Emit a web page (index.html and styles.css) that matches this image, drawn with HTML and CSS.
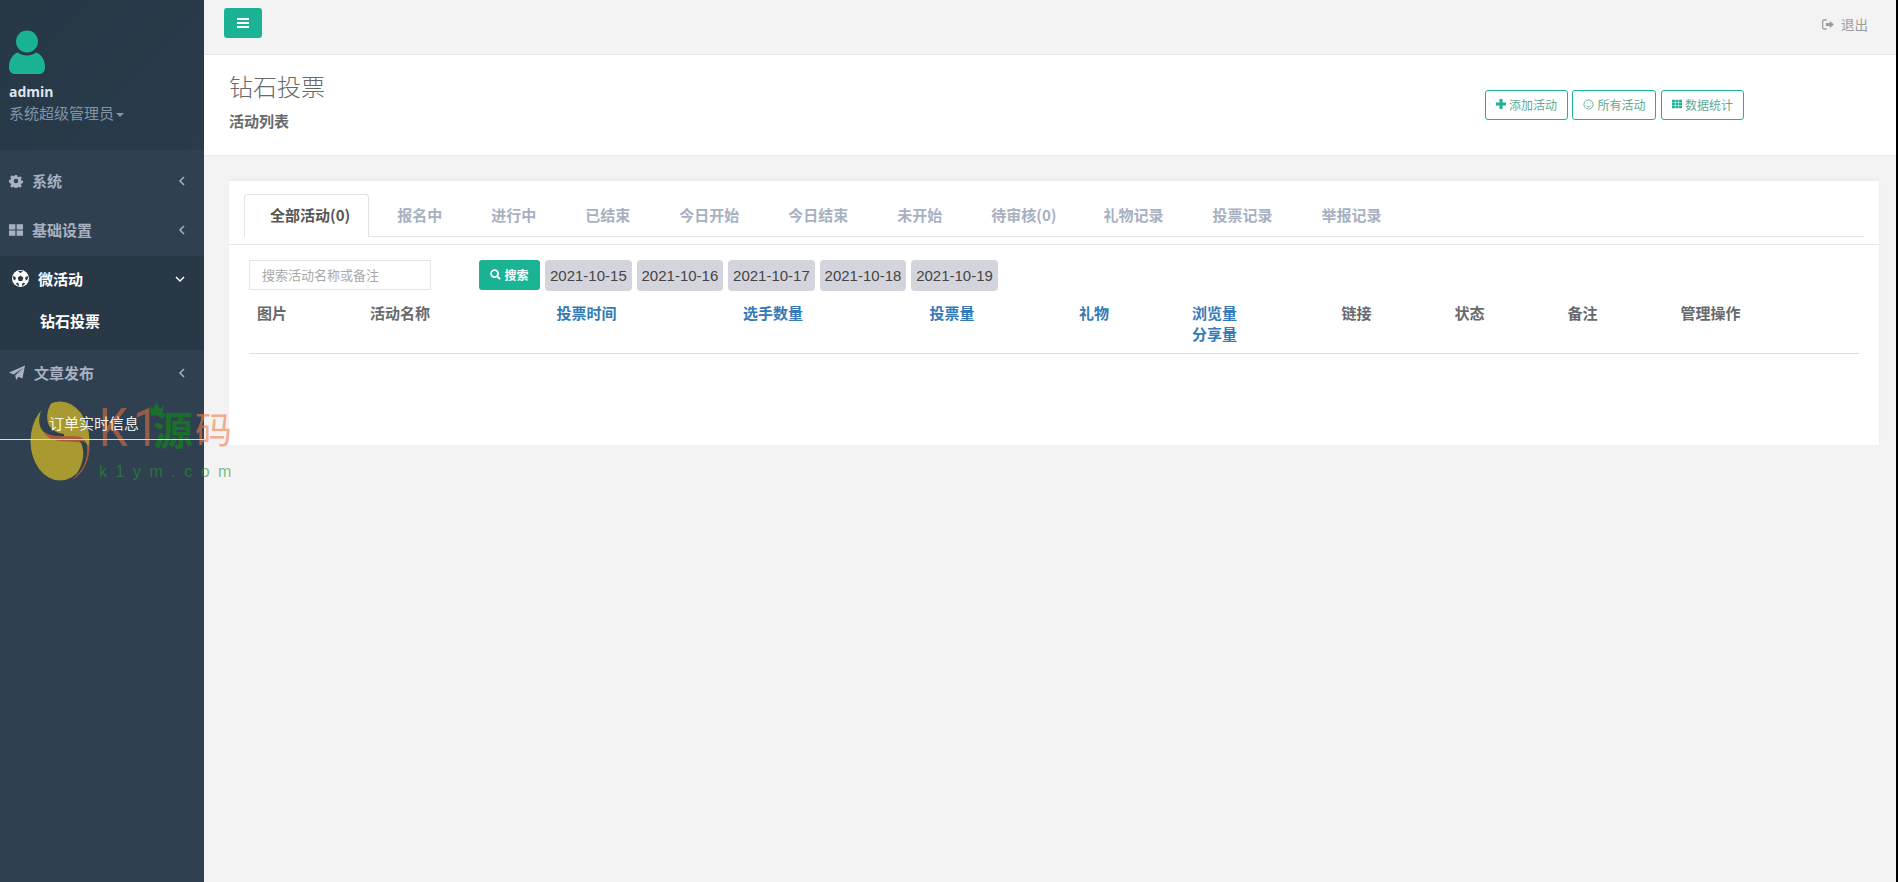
FILE: index.html
```html
<!DOCTYPE html>
<html lang="zh-CN">
<head>
<meta charset="utf-8">
<title>钻石投票</title>
<link rel="stylesheet" href="styles.css">
</head>
<body>
<div class="app">
  <aside class="sidebar">
    <div class="profile">
      <svg class="avatar" viewBox="0 0 36 44"><circle cx="18" cy="11.500" r="11"/><path d="M9 22.500c2.500 2 5.500 3 9 3s6.500-1 9-3c5 1.500 9 7 9 14v1c0 4-2.500 6.500-6 6.500H6c-3.500 0-6-2.500-6-6.500v-1c0-7 4-12.500 9-14z"/></svg>
      <div class="profile-name">admin</div>
      <div class="profile-role">系统超级管理员<span class="caret"></span></div>
    </div>
    <nav class="nav">
      <a class="nav-item">
        <svg class="nav-icon" viewBox="0 0 16 16"><path d="M6.700 1h2.600l.4 2 1.300.6 1.800-1.100 1.800 1.800-1.100 1.800.6 1.300 1.900.4v2.600l-1.900.4-.6 1.300 1.100 1.800-1.800 1.800-1.800-1.100-1.300.6-.4 1.800H6.700l-.4-1.800-1.300-.6-1.800 1.100-1.800-1.800 1.100-1.800-.6-1.300L0 9.400V6.800l1.900-.4.6-1.300-1.100-1.800 1.800-1.800 1.800 1.100 1.300-.6zM8 5.500a2.600 2.600 0 1 0 0 5.200 2.600 2.600 0 0 0 0-5.200z" fill-rule="evenodd"/></svg>
        <span class="nav-label">系统</span>
        <svg class="chev" viewBox="0 0 10 12"><path d="M7 2 3 6l4 4"/></svg>
      </a>
      <a class="nav-item">
        <svg class="nav-icon" viewBox="0 0 16 16"><path d="M0 1.500h7.300v6H0zM8.700 1.500H16v6H8.700zM0 8.500h7.300v6H0zM8.700 8.500H16v6H8.700z"/></svg>
        <span class="nav-label">基础设置</span>
        <svg class="chev" viewBox="0 0 10 12"><path d="M7 2 3 6l4 4"/></svg>
      </a>
      <div class="nav-group">
        <a class="nav-item nav-item-active">
          <svg class="nav-icon nav-icon-ball" viewBox="0 0 16 16"><circle cx="8" cy="8" r="8"/><path class="ball-patch" d="M8 5.200 10.700 7.200 9.700 10.300H6.300L5.300 7.200zM5.600 1.300 8 2.800 10.400 1.300 8 .8zM1.300 5.500 1 8.500 3 9.900 3.700 7zM14.700 5.500 12.300 7 13 9.900 15 8.500zM3.500 12.700 6 15 6.800 14 5.500 11.700zM12.500 12.700 10 15 9.200 14 10.500 11.700z"/></svg>
          <span class="nav-label">微活动</span>
          <svg class="chev chev-down" viewBox="0 0 12 10"><path d="M2 3l4 4 4-4"/></svg>
        </a>
        <a class="nav-sub">钻石投票</a>
      </div>
      <a class="nav-item">
        <svg class="nav-icon nav-icon-plane" viewBox="0 0 16 16"><path d="M16 .500 13.500 13.500 9.500 11.800 7.200 15l-1-4.500L14 3 4.800 9.500 0 7.500z"/></svg>
        <span class="nav-label">文章发布</span>
        <svg class="chev" viewBox="0 0 10 12"><path d="M7 2 3 6l4 4"/></svg>
      </a>
      <div class="order-info">订单实时信息</div>
    </nav>
    <div class="order-rule"></div>
  </aside>

  <main class="main">
    <header class="topbar">
      <button class="menu-btn" type="button" aria-label="菜单">
        <svg viewBox="0 0 12 10"><path d="M0 0h12v2H0zM0 4h12v2H0zM0 8h12v2H0z"/></svg>
      </button>
      <a class="logout">
        <svg viewBox="0 0 14 12"><path d="M5.500 0v1.500H2.500c-.6 0-1 .4-1 1v7c0 .6.400 1 1 1h3V12h-3A2.500 2.500 0 0 1 0 9.500v-7A2.500 2.500 0 0 1 2.500 0zM9 2l5 4-5 4V7.700H4.500V4.300H9z"/></svg>
        退出
      </a>
    </header>

    <section class="heading">
      <div>
        <h2 class="heading-title">钻石投票</h2>
        <div class="heading-sub">活动列表</div>
      </div>
      <div class="heading-actions">
        <a class="outline-btn"><svg viewBox="0 0 10 10" class="solid"><path d="M3.500 0h3v3.500H10v3H6.500V10h-3V6.500H0v-3h3.500z"/></svg>添加活动</a>
        <a class="outline-btn"><svg viewBox="0 0 12 12" class="line"><circle cx="6" cy="6" r="5"/><path d="M3.500 7.200c.6 1 1.500 1.500 2.500 1.500s1.900-.5 2.500-1.500M4.300 4v.8M7.700 4v.8"/></svg>所有活动</a>
        <a class="outline-btn"><svg viewBox="0 0 12 10" class="solid"><path d="M0 0h3.500v2.800H0zM4.200 0h3.600v2.800H4.200zM8.500 0H12v2.800H8.500zM0 3.600h3.500v2.800H0zM4.200 3.600h3.600v2.800H4.200zM8.500 3.600H12v2.800H8.500zM0 7.200h3.500V10H0zM4.200 7.200h3.600V10H4.200zM8.500 7.200H12V10H8.500z"/></svg>数据统计</a>
      </div>
    </section>

    <section class="card">
      <div class="tabs-wrap">
        <ul class="tabs">
          <li class="tab tab-active">全部活动(0)</li>
          <li class="tab">报名中</li>
          <li class="tab">进行中</li>
          <li class="tab">已结束</li>
          <li class="tab">今日开始</li>
          <li class="tab">今日结束</li>
          <li class="tab">未开始</li>
          <li class="tab tab-count">待审核(0)</li>
          <li class="tab">礼物记录</li>
          <li class="tab">投票记录</li>
          <li class="tab">举报记录</li>
        </ul>
      </div>
      <div class="card-body">
        <div class="filters">
          <input class="search-input" type="text" placeholder="搜索活动名称或备注">
          <button class="search-btn" type="button">
            <svg viewBox="0 0 12 12"><circle cx="5" cy="5" r="3.800"/><path d="M8 8l3 3"/></svg>搜索
          </button>
          <a class="date-pill">2021-10-15</a>
          <a class="date-pill">2021-10-16</a>
          <a class="date-pill">2021-10-17</a>
          <a class="date-pill">2021-10-18</a>
          <a class="date-pill">2021-10-19</a>
        </div>
        <table class="data-table">
          <colgroup>
            <col class="c-s"><col class="c-l"><col class="c-l"><col class="c-l"><col class="c-m"><col class="c-s"><col class="c-m"><col class="c-s"><col class="c-s"><col class="c-s"><col>
          </colgroup>
          <thead>
            <tr>
              <th>图片</th>
              <th>活动名称</th>
              <th class="sortable">投票时间</th>
              <th class="sortable">选手数量</th>
              <th class="sortable">投票量</th>
              <th class="sortable">礼物</th>
              <th class="sortable">浏览量<br>分享量</th>
              <th>链接</th>
              <th>状态</th>
              <th>备注</th>
              <th>管理操作</th>
            </tr>
          </thead>
        </table>
      </div>
    </section>
  </main>
</div>

<div class="watermark" aria-hidden="true">
  <svg class="wm-logo" viewBox="0 0 60 80">
    <ellipse cx="30" cy="40" rx="29.500" ry="39.500" fill="#a89a30"/>
    <path d="M16 1C9 10 7 22 12 29c4 6 14 7 22 7 0-2 0-3 0-3-8-1-14-5-16-11-2-8 0-15 4-21z" fill="#2f4050"/>
    <path d="M13 30c9 8 27 4 37 6 4 1 6 4 7 8-7-4-17-3-27-4-8-1-14-4-17-10z" fill="#a85a3e"/>
    <path d="M50 40c6 10 4 26-8 39 10-5 16-19 16-33-1-4-4-6-8-6z" fill="#2f4050"/>
    <path d="M57 44c2 14-5 28-16 35 11-4 19-19 18.500-35z" fill="#a85a3e"/>
  </svg>
  <div class="wm-text">
    <div class="wm-title"><span class="wm-k">K<i class="wm-one">1</i></span><span class="wm-yuan">源</span><span class="wm-ma">码</span>
      <svg class="wm-crown" viewBox="0 0 16 14"><path d="M0 3l4 4 4-7 4 7 4-4-2 11H2z"/></svg>
    </div>
    <div class="wm-url">k1ym.com</div>
  </div>
</div>
</body>
</html>
```

FILE: styles.css
```css
* { box-sizing: border-box; }
html, body { margin: 0; height: 100%; }
body {
  font-family: "Noto Sans CJK SC", "Liberation Sans", sans-serif;
  font-size: 13px;
  color: #676a6c;
  background: #000;
  overflow: hidden;
}
.app { display: flex; width: 1896px; height: 882px; background: #f3f3f4; }

.sidebar { position: relative; width: 204px; flex: none; background: #2f4050; }
.profile {
  height: 150px;
  padding: 30px 9px 0;
  background: linear-gradient(135deg, #263746 0%, #2a3b4b 100%);
}
.avatar { display: block; width: 36px; height: 44px; fill: #1ab394; }
.profile-name { margin-top: 8px; font: 700 14px/20px "Open Sans", "Liberation Sans", sans-serif; color: #dfe4ed; }
.profile-role { font-size: 15px; line-height: 22px; color: #8095a8; white-space: nowrap; }
.caret {
  display: inline-block; margin-left: 2px; vertical-align: middle;
  border-top: 4px solid #8095a8; border-left: 4px solid transparent; border-right: 4px solid transparent;
}
.nav { padding-top: 8px; }
.nav-item {
  display: flex; align-items: center; height: 49px; padding: 0 17px 4px 9px;
  font-size: 15px; font-weight: 700; color: #a7b1c2;
}
.nav-icon { width: 14px; height: 14px; fill: #a7b1c2; flex: none; }
.nav-label { margin-left: 9px; }
.chev { margin-left: auto; width: 10px; height: 12px; fill: none; stroke: #a7b1c2; stroke-width: 1.500; }
.nav-group { background: #293846; height: 94px; }
.nav-item-active { color: #fff; padding-left: 12px; padding-right: 18px; }
.nav-icon-ball { width: 17px; height: 17px; fill: #fff; }
.ball-patch { fill: #293846; }
.nav-icon-plane { width: 16px; height: 16px; }
.chev-down { width: 12px; height: 10px; stroke: #fff; }
.nav-sub { display: block; padding-left: 40px; font-size: 15px; font-weight: 700; line-height: 22px; margin-top: 5px; color: #fff; }
.order-info { position: relative; z-index: 2; margin: 13px 0 0 49px; font-size: 15px; line-height: 22px; color: rgba(255,255,255,.92); white-space: nowrap; }
.order-rule { position: absolute; z-index: 2; left: 0; top: 439px; width: 204px; height: 1px; background: #d9dcdc; }

.main { flex: 1; min-width: 0; }
.topbar {
  display: flex; align-items: flex-start; justify-content: space-between;
  height: 55px; padding: 8px 28px 0 20px;
  border-bottom: 1px solid #e7e7e8;
}
.menu-btn {
  display: flex; align-items: center; justify-content: center;
  width: 38px; height: 30px; padding: 0; border: 0; border-radius: 3px; background: #1ab394;
}
.menu-btn svg { width: 12px; height: 10px; fill: #fff; }
.logout { display: flex; align-items: center; gap: 7px; height: 32px; font-size: 13.500px; color: #999c9e; }
.logout svg { width: 12px; height: 11px; fill: #999c9e; }

.heading {
  display: flex; justify-content: space-between; align-items: flex-start;
  height: 101px; padding: 13px 152px 0 25px;
  background: #fff; border-bottom: 1px solid #e7eaec;
}
.heading-title { margin: 0; font-size: 24px; font-weight: 300; line-height: 36px; color: #676a6c; }
.heading-sub { margin-top: 6px; font-size: 15px; font-weight: 700; line-height: 22px; color: #676a6c; }
.heading-actions { display: flex; gap: 4.500px; margin-top: 22px; }
.outline-btn {
  display: flex; align-items: center; gap: 3px; height: 30px; padding: 0 10px 2px;
  border: 1px solid #1ab394; border-radius: 3px;
  font-size: 12px; color: #5fa897; white-space: nowrap;
}
.outline-btn svg { width: 10px; height: 10px; flex: none; }
.outline-btn .solid { fill: #1ab394; }
.outline-btn .line { width: 11px; height: 11px; fill: none; stroke: #5fa897; stroke-width: 1; }

.card {
  margin: 24px 17px 0 25px; height: 265px;
  background: #fff; border-top: 1px solid #ececec;
  box-shadow: 0 -2px 3px rgba(0,0,0,.03);
}
.tabs-wrap { padding: 13px 15px 0 15px; height: 64px; border-bottom: 1px solid #e7eaec; }
.tabs { display: flex; margin: 0; padding: 0; list-style: none; border-bottom: 1px solid #e0e2e6; height: 43px; }
.tab {
  height: 42px; padding: 0 23.500px; font-size: 15px; font-weight: 700; line-height: 40px;
  color: #a7b1c2; white-space: nowrap; border: 1px solid transparent; border-bottom: 0;
}
.tab-count { padding-right: 21.500px; }
.tab-active {
  height: 43px; margin: 0 3.500px -1px 0; padding: 0 18px 0 25px; color: #555;
  background: #fff; border-color: #e0e2e6; border-radius: 4px 4px 0 0;
}
.card-body { padding: 15px 20px 0; }
.filters { display: flex; align-items: flex-start; height: 35px; }
.search-input {
  width: 182px; height: 30px; padding: 0 12px 2px; border: 1px solid #e5e6e7; background: #fff;
  font: 13px "Noto Sans CJK SC", sans-serif; color: #676a6c; outline: 0;
}
.search-input::placeholder { color: #a9a9a9; }
.search-btn {
  display: flex; align-items: center; justify-content: center; gap: 3px;
  width: 61px; height: 30px; margin: 0 5px 0 48px; padding: 0 0 2px; border: 0; border-radius: 3px;
  background: #1ab394; color: #fff; font: 700 12px "Noto Sans CJK SC", sans-serif;
}
.search-btn svg { width: 11px; height: 11px; fill: none; stroke: #fff; stroke-width: 2; }
.date-pill {
  height: 31px; margin-right: 4.800px; padding: 0 5px; border-radius: 4px; background: #d4d4dd;
  font: 15px/31px "Liberation Sans", sans-serif; color: #444; white-space: nowrap;
}
.data-table { width: 1610px; table-layout: fixed; border-collapse: collapse; }
.c-s { width: 113px; }
.c-l { width: 186.500px; }
.c-m { width: 149.500px; }
.data-table th {
  padding: 7px 8px 9px; border-bottom: 1px solid #dcdee0; vertical-align: top; text-align: left;
  font-size: 15px; font-weight: 700; line-height: 21px; color: #676a6c;
}
.data-table th.sortable { color: #337ab7; }

.watermark {
  position: absolute; z-index: 1; left: 30px; top: 401px; display: flex; gap: 9px;
  width: 205px; height: 80px; pointer-events: none;
}
.wm-logo { width: 60px; height: 80px; flex: none; }
.wm-text { display: flex; flex-direction: column; }
.wm-title { position: relative; display: flex; align-items: center; height: 54px; white-space: nowrap; }
.wm-k {
  display: block; width: 54px; font: 400 54px/54px Roboto, "Liberation Sans", sans-serif;
  color: rgba(216,110,70,.62); transform: scaleX(.85); transform-origin: left center;
}
.wm-one { font-style: normal; margin-left: 6px; }
.wm-yuan { display: block; width: 42px; font-size: 40px; font-weight: 700; line-height: 54px; color: #1c6e2c; }
.wm-ma { display: block; width: 37px; font-size: 37px; line-height: 54px; color: rgba(245,125,70,.62); }
.wm-crown { position: absolute; left: 50px; top: 1px; width: 15px; height: 14px; fill: #1c6e2c; }
.wm-url { margin-top: 8px; font: 16px/18px "Liberation Sans", sans-serif; letter-spacing: 8.500px; color: rgba(40,150,50,.6); white-space: nowrap; }
```
